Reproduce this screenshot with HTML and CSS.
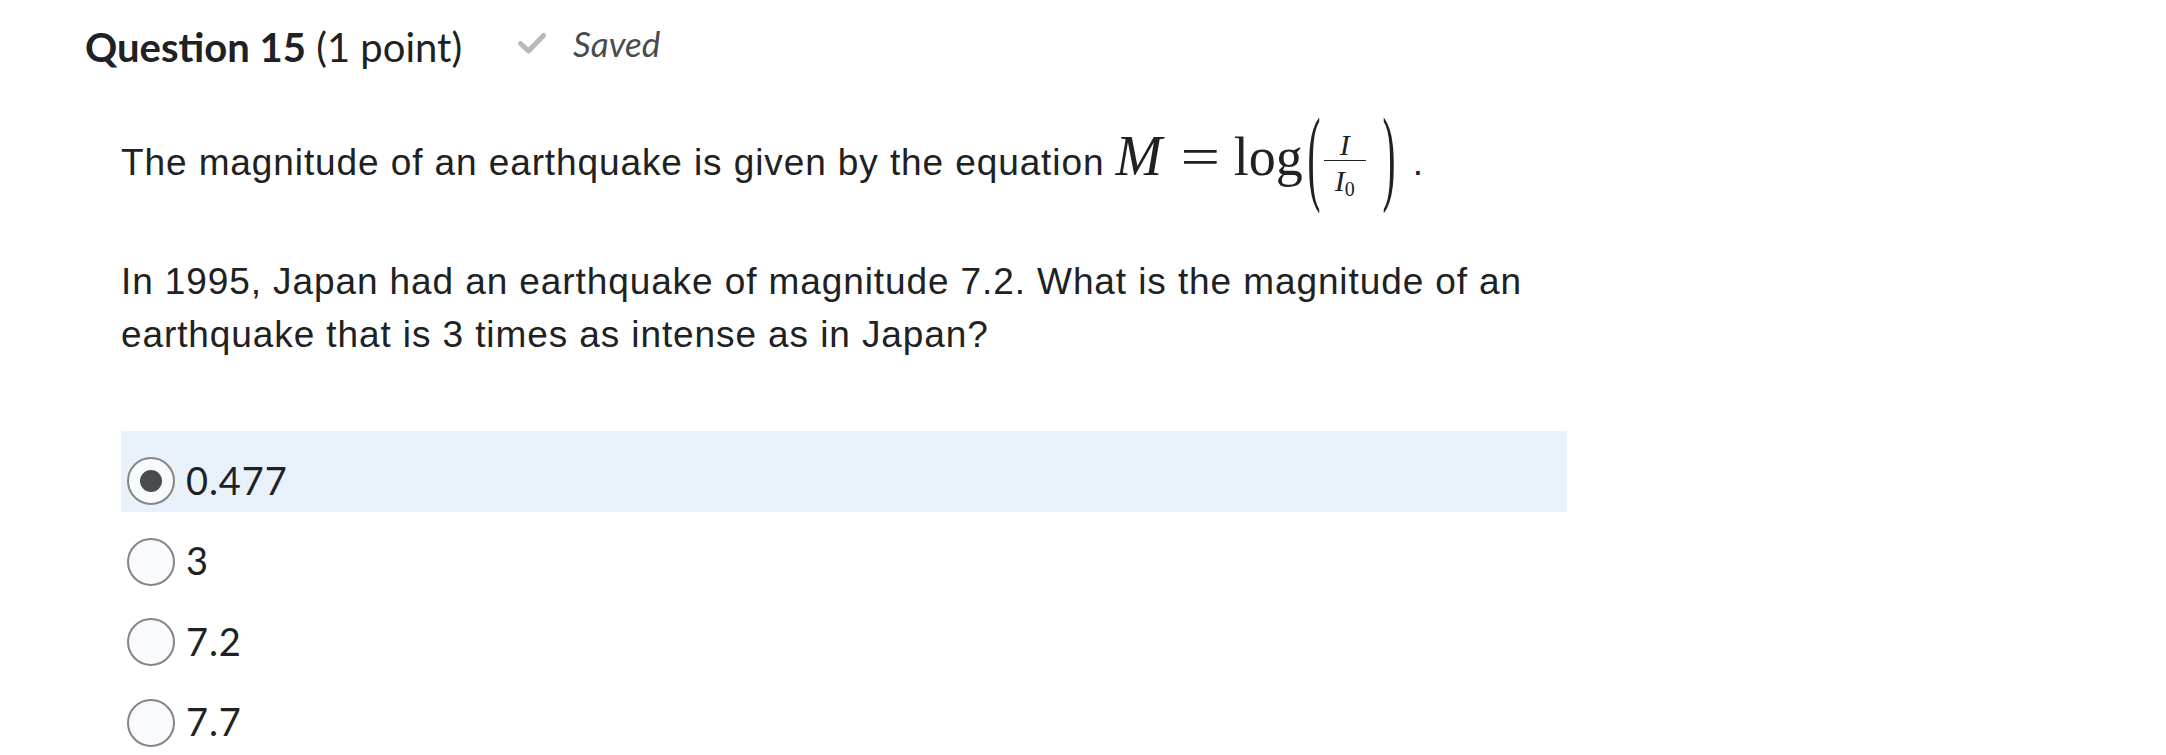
FILE: index.html
```html
<!DOCTYPE html>
<html lang="en">
<head>
<meta charset="utf-8">
<title>Question 15</title>
<link rel="stylesheet" href="styles.css">
</head>
<body>
<div class="quiz">
  <div class="q-header">
    <h2 class="q-title"><span class="q-num">Question 15</span> <span class="q-pts">(1 point)</span></h2>
    <div class="q-status">
      <svg class="check" width="32" height="24" viewBox="0 0 32 24" aria-hidden="true"><path d="M4.5 12.5 L12.5 20 L27.5 4.5" fill="none" stroke="#b4babe" stroke-width="5" stroke-linecap="round" stroke-linejoin="round"/></svg>
      <span class="saved">Saved</span>
    </div>
  </div>
  <div class="q-body">
    <p class="stem stem-eq">The magnitude of an earthquake is given by the equation <span class="math"><span class="mi big">M</span><span class="mo">=</span><span class="mop">log</span><span class="delim">(</span><span class="frac"><span class="num"><span class="mi">I</span></span><span class="den"><span class="mi">I</span><span class="sub">0</span></span></span><span class="delim">)</span></span>.</p>
    <p class="stem stem-q">In 1995, Japan had an earthquake of magnitude 7.2. What is the magnitude of an earthquake that is 3 times as intense as in Japan?</p>
    <div class="choices">
      <div class="choice selected"><span class="radio"><span class="dot"></span></span><span class="choice-text">0.477</span></div>
      <div class="choice"><span class="radio"></span><span class="choice-text">3</span></div>
      <div class="choice"><span class="radio"></span><span class="choice-text">7.2</span></div>
      <div class="choice"><span class="radio"></span><span class="choice-text">7.7</span></div>
    </div>
  </div>
</div>
</body>
</html>
```

FILE: styles.css
```css
body {
  margin: 0;
  background: #ffffff;
  color: #202122;
}

.quiz {
  padding: 23px 0 0 85px;
}

.q-header {
  display: flex;
  align-items: flex-start;
  gap: 54px;
}

.q-title {
  margin: 0;
  font-family: Lato, "Noto Sans", sans-serif;
  font-size: 40px;
  line-height: 48px;
  font-weight: 400;
  color: #202122;
}

.q-num {
  font-weight: 700;
}

.q-status {
  display: flex;
  align-items: center;
  gap: 25px;
  margin-top: 1.5px;
  height: 36px;
}

.check {
  display: block;
}

.saved {
  font-family: Lato, "Noto Sans", sans-serif;
  font-style: italic;
  font-size: 35px;
  line-height: 36px;
  color: #494c4e;
}

.q-body {
  margin-left: 36px;
  width: 1446px;
  font-family: "Liberation Sans", Arial, sans-serif;
  font-size: 37px;
  letter-spacing: 0.9px;
  color: #202122;
}

.stem {
  margin: 0;
  line-height: 52.6px;
}

.stem-eq {
  margin-top: 60px;
}

.stem-q {
  margin-top: 61px;
}

.math {
  font-family: "Liberation Serif", "Times New Roman", serif;
  font-size: 54px;
  line-height: 40px;
  letter-spacing: 0;
  margin-right: 15px;
}

.mi {
  font-style: italic;
}

.big {
  font-size: 56px;
}

.mo {
  display: inline-block;
  margin: 0 18px 0 23px;
  transform: scaleX(1.3);
}

.mop {
  margin-right: 2px;
}

.delim {
  display: inline-block;
  font-size: 54px;
  line-height: 40px;
  transform-origin: 50% 24.7px;
  transform: translateY(3px) scale(0.72, 1.95);
}

.frac {
  display: inline-block;
  vertical-align: -16px;
  width: 42px;
  margin: 0 14px 0 1px;
  text-align: center;
}

.num,
.den {
  display: block;
  font-size: 30px;
  line-height: 28px;
}

.num {
  border-bottom: 1.5px solid #202122;
  padding-bottom: 1px;
}

.den {
  padding-top: 6px;
}

.sub {
  font-size: 20px;
  line-height: 0;
  vertical-align: -5px;
  font-style: normal;
}

.choices {
  margin-top: 70px;
}

.choice {
  display: flex;
  align-items: flex-start;
  gap: 11px;
  padding: 26px 0 6.5px 6px;
}

.choice.selected {
  background: #e9f1fb;
}

.radio {
  box-sizing: border-box;
  width: 48px;
  height: 48px;
  border: 2px solid #858585;
  border-radius: 50%;
  background: #f9fafe;
  display: flex;
  align-items: center;
  justify-content: center;
  flex: none;
}

.dot {
  width: 22px;
  height: 22px;
  border-radius: 50%;
  background: #494c4e;
}

.choice-text {
  font-family: Lato, "Noto Sans", sans-serif;
  font-size: 38px;
  line-height: 48px;
  margin-top: -1.5px;
  color: #202122;
}
```
